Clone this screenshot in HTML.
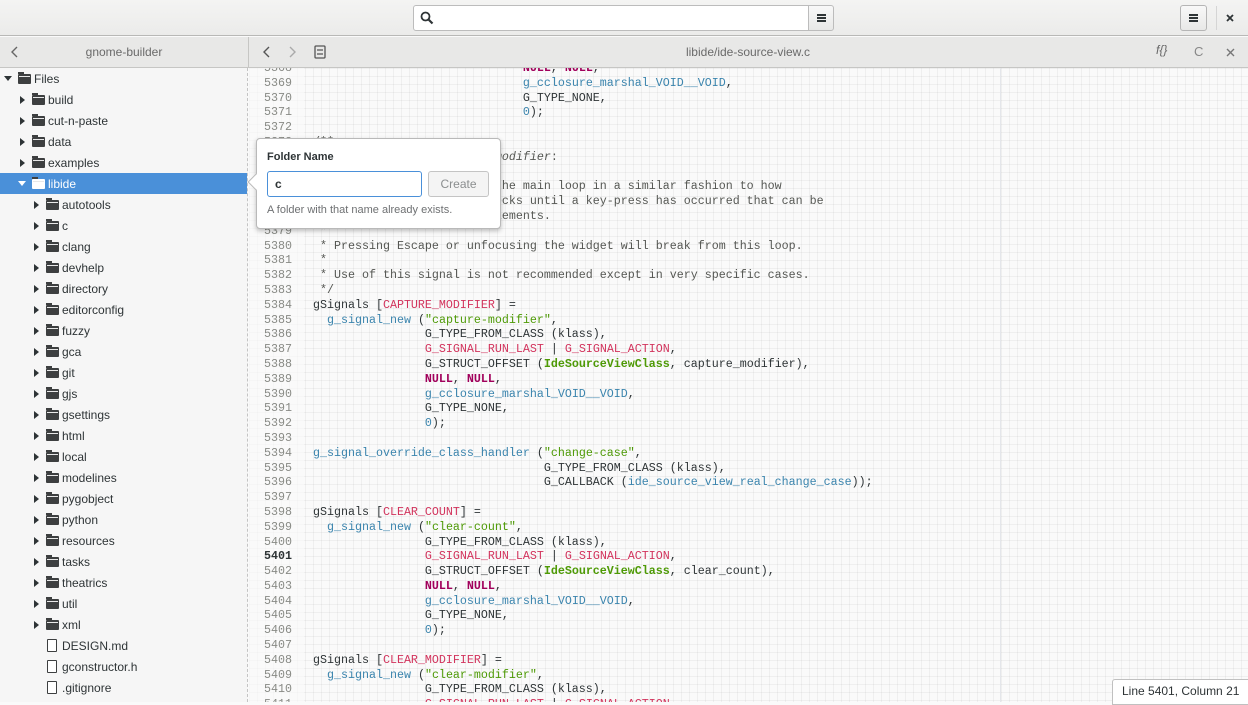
<!DOCTYPE html>
<html><head><meta charset="utf-8"><style>
*{box-sizing:border-box;margin:0;padding:0}
body{width:1248px;height:702px;overflow:hidden;position:relative;background:#fafafa;font-family:"Liberation Sans",sans-serif;color:#2e3436}
.abs{position:absolute}
#hdr{left:0;top:0;width:1248px;height:36px;background:linear-gradient(#f4f4f3,#ebebea);border-bottom:1px solid #b8b8b6}
#search{left:413px;top:5px;width:396px;height:26px;background:#fff;border:1px solid #bcbcbc;border-radius:3px 0 0 3px}
#smenu{left:808px;top:5px;width:26px;height:26px;background:linear-gradient(#f8f8f8,#e8e8e7);border:1px solid #bcbcbc;border-radius:0 3px 3px 0}
.ham{position:absolute;left:8px;width:9px;height:2px;background:#2e3436}
#menu{left:1180px;top:5px;width:27px;height:26px;background:linear-gradient(#f8f8f8,#e8e8e7);border:1px solid #b5b5b5;border-radius:3px}
#sep{left:1216px;top:6px;width:1px;height:24px;background:#d5d5d5}
#bar2{left:0;top:37px;width:1248px;height:31px;background:#e8e8e7;border-bottom:1px solid #c6c6c4}
#side{left:0;top:68px;width:248px;height:634px;background:#f6f6f6;border-right:1px dashed #c4c4c4}
#vsep{left:248px;top:37px;width:1px;height:31px;background:#c6c6c4}
.row{position:absolute;left:0;width:247px;height:21px;font-size:12px;line-height:22px;color:#2e3436}
.row.sel{background:#4a90d9;color:#fff}
.exp{position:absolute;top:7px;width:0;height:0;border-top:4px solid transparent;border-bottom:4px solid transparent;border-left:5px solid #2e3436}
.expd{position:absolute;top:8px;width:0;height:0;border-left:4px solid transparent;border-right:4px solid transparent;border-top:5px solid #2e3436}
.fold{position:absolute;top:6px;width:13px;height:10px;background:#3d3f40;border-radius:1px}
.fold:before{content:"";position:absolute;left:0;top:-2px;width:6px;height:2px;background:#3d3f40}
.fold:after{content:"";position:absolute;left:1px;top:2px;width:11px;height:1px;background:#e8e8e8}
.file{position:absolute;top:4px;width:10px;height:13px;border:1.5px solid #3d3f40;background:#fff;border-radius:1px}
.lbl{position:absolute;top:0}
#ed{left:249px;top:68px;width:999px;height:634px;overflow:hidden;background-color:#fafafa;
background-image:linear-gradient(90deg,rgba(0,0,0,.045) 1px,transparent 1px),linear-gradient(rgba(0,0,0,.045) 1px,transparent 1px);background-size:8px 8px}
#gut{left:0;top:0;width:55px;height:634px;background:rgba(250,250,250,.6)}
#code{position:absolute;left:0;top:-7px;font-family:"Liberation Mono",monospace;font-size:11.67px;line-height:14.8px;white-space:pre;color:#2e3436}
.ln{display:inline-block;width:43px;text-align:right;color:#888a85;margin-right:21px}
.b{color:#3a84ad}.r{color:#d2335c}.m{color:#a1005b;font-weight:bold}.g{color:#4e9a06}.gb{color:#4e9a06;font-weight:bold}.c{color:#555753}.i{font-style:italic}
#pop{left:256px;top:138px;width:245px;height:91px;background:#fff;border:1px solid #b9b9b9;border-radius:4px;box-shadow:0 2px 5px rgba(0,0,0,.25)}
#arr{left:250px;top:176px;width:12px;height:12px;background:#fff;border-left:1px solid #b9b9b9;border-bottom:1px solid #b9b9b9;transform:rotate(45deg)}
#status{left:1112px;top:679px;width:140px;height:26px;background:#fff;border:1px solid #c0c0c0;border-radius:3px 0 0 0;font-size:12px;padding:4px 0 0 9px}
</style></head><body>
<div id="hdr" class="abs"></div>
<div id="search" class="abs"><svg style="position:absolute;left:6px;top:5px" width="14" height="14" viewBox="0 0 14 14"><circle cx="5.5" cy="5.5" r="4" fill="none" stroke="#2e3436" stroke-width="1.8"/><path d="M8.5 8.5L12.5 12.5" stroke="#2e3436" stroke-width="2.2"/></svg></div>
<div id="smenu" class="abs"><div class="ham" style="top:8px"></div><div class="ham" style="top:11px"></div><div class="ham" style="top:14px"></div></div>
<div id="menu" class="abs"><div class="ham" style="top:8px"></div><div class="ham" style="top:11px"></div><div class="ham" style="top:14px"></div></div>
<div id="sep" class="abs"></div>
<svg class="abs" style="left:1225px;top:13px" width="10" height="10"><path d="M2 2L8 8M8 2L2 8" stroke="#2e3436" stroke-width="1.8"/></svg>
<div id="bar2" class="abs"></div>
<div id="vsep" class="abs"></div>
<svg class="abs" style="left:10px;top:46px" width="10" height="12"><path d="M7 1L2 6L7 11" fill="none" stroke="#666" stroke-width="1.4"/></svg>
<div class="abs" style="left:0;top:45px;width:248px;text-align:center;font-size:12px;color:#6a6a6a">gnome-builder</div>
<svg class="abs" style="left:262px;top:46px" width="10" height="12"><path d="M7 1L2 6L7 11" fill="none" stroke="#555" stroke-width="1.4"/></svg>
<svg class="abs" style="left:287px;top:46px" width="10" height="12"><path d="M3 1L8 6L3 11" fill="none" stroke="#aaa" stroke-width="1.4"/></svg>
<svg class="abs" style="left:314px;top:45px" width="12" height="14"><rect x="1" y="1" width="10" height="12" rx="1" fill="none" stroke="#555" stroke-width="1.3"/><path d="M3 5H9M3 9H9" stroke="#555" stroke-width="1.3"/></svg>
<div class="abs" style="left:600px;top:45px;width:296px;text-align:center;font-size:12px;color:#6a6a6a">libide/ide-source-view.c</div>
<div class="abs" style="left:1156px;top:43px;font-size:12px;color:#666;font-style:italic">f{}</div>
<div class="abs" style="left:1194px;top:44px;font-size:13px;color:#888">C</div>
<svg class="abs" style="left:1226px;top:48px" width="9" height="9"><path d="M1 1L8 8M8 1L1 8" stroke="#777" stroke-width="1.4"/></svg>

<div id="side" class="abs">
<div class="row" style="top:0"><div class="expd" style="left:4px"></div><div class="fold" style="left:18px"></div><span class="lbl" style="left:34px">Files</span></div>
<div class="row" style="top:21px"><div class="exp" style="left:20px"></div><div class="fold" style="left:32px"></div><span class="lbl" style="left:48px">build</span></div>
<div class="row" style="top:42px"><div class="exp" style="left:20px"></div><div class="fold" style="left:32px"></div><span class="lbl" style="left:48px">cut-n-paste</span></div>
<div class="row" style="top:63px"><div class="exp" style="left:20px"></div><div class="fold" style="left:32px"></div><span class="lbl" style="left:48px">data</span></div>
<div class="row" style="top:84px"><div class="exp" style="left:20px"></div><div class="fold" style="left:32px"></div><span class="lbl" style="left:48px">examples</span></div>
<div class="row sel" style="top:105px"><div class="expd" style="left:18px;border-top-color:#fff"></div><div class="fold" style="left:32px;background:#fff"></div><span class="lbl" style="left:48px">libide</span></div>
<div class="row" style="top:126px"><div class="exp" style="left:34px"></div><div class="fold" style="left:46px"></div><span class="lbl" style="left:62px">autotools</span></div>
<div class="row" style="top:147px"><div class="exp" style="left:34px"></div><div class="fold" style="left:46px"></div><span class="lbl" style="left:62px">c</span></div>
<div class="row" style="top:168px"><div class="exp" style="left:34px"></div><div class="fold" style="left:46px"></div><span class="lbl" style="left:62px">clang</span></div>
<div class="row" style="top:189px"><div class="exp" style="left:34px"></div><div class="fold" style="left:46px"></div><span class="lbl" style="left:62px">devhelp</span></div>
<div class="row" style="top:210px"><div class="exp" style="left:34px"></div><div class="fold" style="left:46px"></div><span class="lbl" style="left:62px">directory</span></div>
<div class="row" style="top:231px"><div class="exp" style="left:34px"></div><div class="fold" style="left:46px"></div><span class="lbl" style="left:62px">editorconfig</span></div>
<div class="row" style="top:252px"><div class="exp" style="left:34px"></div><div class="fold" style="left:46px"></div><span class="lbl" style="left:62px">fuzzy</span></div>
<div class="row" style="top:273px"><div class="exp" style="left:34px"></div><div class="fold" style="left:46px"></div><span class="lbl" style="left:62px">gca</span></div>
<div class="row" style="top:294px"><div class="exp" style="left:34px"></div><div class="fold" style="left:46px"></div><span class="lbl" style="left:62px">git</span></div>
<div class="row" style="top:315px"><div class="exp" style="left:34px"></div><div class="fold" style="left:46px"></div><span class="lbl" style="left:62px">gjs</span></div>
<div class="row" style="top:336px"><div class="exp" style="left:34px"></div><div class="fold" style="left:46px"></div><span class="lbl" style="left:62px">gsettings</span></div>
<div class="row" style="top:357px"><div class="exp" style="left:34px"></div><div class="fold" style="left:46px"></div><span class="lbl" style="left:62px">html</span></div>
<div class="row" style="top:378px"><div class="exp" style="left:34px"></div><div class="fold" style="left:46px"></div><span class="lbl" style="left:62px">local</span></div>
<div class="row" style="top:399px"><div class="exp" style="left:34px"></div><div class="fold" style="left:46px"></div><span class="lbl" style="left:62px">modelines</span></div>
<div class="row" style="top:420px"><div class="exp" style="left:34px"></div><div class="fold" style="left:46px"></div><span class="lbl" style="left:62px">pygobject</span></div>
<div class="row" style="top:441px"><div class="exp" style="left:34px"></div><div class="fold" style="left:46px"></div><span class="lbl" style="left:62px">python</span></div>
<div class="row" style="top:462px"><div class="exp" style="left:34px"></div><div class="fold" style="left:46px"></div><span class="lbl" style="left:62px">resources</span></div>
<div class="row" style="top:483px"><div class="exp" style="left:34px"></div><div class="fold" style="left:46px"></div><span class="lbl" style="left:62px">tasks</span></div>
<div class="row" style="top:504px"><div class="exp" style="left:34px"></div><div class="fold" style="left:46px"></div><span class="lbl" style="left:62px">theatrics</span></div>
<div class="row" style="top:525px"><div class="exp" style="left:34px"></div><div class="fold" style="left:46px"></div><span class="lbl" style="left:62px">util</span></div>
<div class="row" style="top:546px"><div class="exp" style="left:34px"></div><div class="fold" style="left:46px"></div><span class="lbl" style="left:62px">xml</span></div>
<div class="row" style="top:567px"><div class="file" style="left:47px"></div><span class="lbl" style="left:62px">DESIGN.md</span></div>
<div class="row" style="top:588px"><div class="file" style="left:47px"></div><span class="lbl" style="left:62px">gconstructor.h</span></div>
<div class="row" style="top:609px"><div class="file" style="left:47px"></div><span class="lbl" style="left:62px">.gitignore</span></div>
</div>

<div id="ed" class="abs">
<div id="gut" class="abs"></div>
<div class="abs" style="left:751px;top:0;width:1px;height:634px;background:#e4e6ea"></div>
<div id="code"><span class="ln">5368</span>                              <span class="m">NULL</span>, <span class="m">NULL</span>,
<span class="ln">5369</span>                              <span class="b">g_cclosure_marshal_VOID__VOID</span>,
<span class="ln">5370</span>                              G_TYPE_NONE,
<span class="ln">5371</span>                              <span class="b">0</span>);
<span class="ln">5372</span>
<span class="ln">5373</span><span class="c">/**</span>
<span class="ln">5374</span><span class="c"> * IdeSourceView::capture-<span class="i">modifier</span>:</span>
<span class="ln">5375</span><span class="c"> *</span>
<span class="ln">5376</span><span class="c"> * This signal will block the main loop in a similar fashion to how</span>
<span class="ln">5377</span><span class="c"> * gtk_dialog_run(). It blocks until a key-press has occurred that can be</span>
<span class="ln">5378</span><span class="c"> * applied to the view's elements.</span>
<span class="ln">5379</span><span class="c"> *</span>
<span class="ln">5380</span><span class="c"> * Pressing Escape or unfocusing the widget will break from this loop.</span>
<span class="ln">5381</span><span class="c"> *</span>
<span class="ln">5382</span><span class="c"> * Use of this signal is not recommended except in very specific cases.</span>
<span class="ln">5383</span><span class="c"> */</span>
<span class="ln">5384</span>gSignals [<span class="r">CAPTURE_MODIFIER</span>] =
<span class="ln">5385</span>  <span class="b">g_signal_new</span> (<span class="g">"capture-modifier"</span>,
<span class="ln">5386</span>                G_TYPE_FROM_CLASS (klass),
<span class="ln">5387</span>                <span class="r">G_SIGNAL_RUN_LAST</span> | <span class="r">G_SIGNAL_ACTION</span>,
<span class="ln">5388</span>                G_STRUCT_OFFSET (<span class="gb">IdeSourceViewClass</span>, capture_modifier),
<span class="ln">5389</span>                <span class="m">NULL</span>, <span class="m">NULL</span>,
<span class="ln">5390</span>                <span class="b">g_cclosure_marshal_VOID__VOID</span>,
<span class="ln">5391</span>                G_TYPE_NONE,
<span class="ln">5392</span>                <span class="b">0</span>);
<span class="ln">5393</span>
<span class="ln">5394</span><span class="b">g_signal_override_class_handler</span> (<span class="g">"change-case"</span>,
<span class="ln">5395</span>                                 G_TYPE_FROM_CLASS (klass),
<span class="ln">5396</span>                                 G_CALLBACK (<span class="b">ide_source_view_real_change_case</span>));
<span class="ln">5397</span>
<span class="ln">5398</span>gSignals [<span class="r">CLEAR_COUNT</span>] =
<span class="ln">5399</span>  <span class="b">g_signal_new</span> (<span class="g">"clear-count"</span>,
<span class="ln">5400</span>                G_TYPE_FROM_CLASS (klass),
<span class="ln" style="color:#2e3436;font-weight:bold">5401</span>                <span class="r">G_SIGNAL_RUN_LAST</span> | <span class="r">G_SIGNAL_ACTION</span>,
<span class="ln">5402</span>                G_STRUCT_OFFSET (<span class="gb">IdeSourceViewClass</span>, clear_count),
<span class="ln">5403</span>                <span class="m">NULL</span>, <span class="m">NULL</span>,
<span class="ln">5404</span>                <span class="b">g_cclosure_marshal_VOID__VOID</span>,
<span class="ln">5405</span>                G_TYPE_NONE,
<span class="ln">5406</span>                <span class="b">0</span>);
<span class="ln">5407</span>
<span class="ln">5408</span>gSignals [<span class="r">CLEAR_MODIFIER</span>] =
<span class="ln">5409</span>  <span class="b">g_signal_new</span> (<span class="g">"clear-modifier"</span>,
<span class="ln">5410</span>                G_TYPE_FROM_CLASS (klass),
<span class="ln">5411</span>                <span class="r">G_SIGNAL_RUN_LAST</span> | <span class="r">G_SIGNAL_ACTION</span>,</div>
</div>

<div id="pop" class="abs">
<div class="abs" style="left:10px;top:12px;font-size:11px;font-weight:bold;color:#2e3436">Folder Name</div>
<div class="abs" style="left:10px;top:32px;width:155px;height:26px;border:1px solid #4a90d9;border-radius:3px;background:#fff;font-size:12px;font-weight:bold;padding:5px 0 0 7px">c</div>
<div class="abs" style="left:171px;top:32px;width:61px;height:26px;border:1px solid #c4c4c4;border-radius:3px;background:#f4f4f4;font-size:12px;color:#8b8e8f;text-align:center;line-height:24px">Create</div>
<div class="abs" style="left:10px;top:65px;font-size:11px;color:#6e7072">A folder with that name already exists.</div>
</div>
<div id="arr" class="abs"></div>
<div id="status" class="abs">Line 5401, Column 21</div>
</body></html>
